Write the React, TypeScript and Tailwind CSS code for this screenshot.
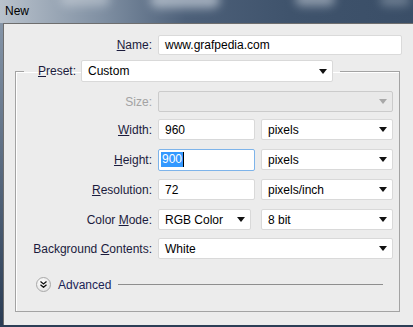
const Arrow = ({ disabled }: { disabled?: boolean }) => (
  <svg width="8" height="5" viewBox="0 0 8 5" className="shrink-0">
    <path d="M0 0h8L4 5z" fill={disabled ? "#a8a8a8" : "#111"} />
  </svg>
);

const Select = ({ value, w }: { value: string; w: string }) => (
  <div
    className={`flex h-[21px] ${w} items-center justify-between rounded-[2px] border border-[#d9d9d9] bg-white pl-[6px] pr-[5px] text-black`}
  >
    <span>{value}</span>
    <Arrow />
  </div>
);

const Field = ({ value, w }: { value: string; w: string }) => (
  <div
    className={`flex h-[21px] ${w} items-center rounded-[2px] border border-[#d9d9d9] bg-white pl-[6px] text-black`}
  >
    {value}
  </div>
);

const Label = ({ children, muted }: { children: React.ReactNode; muted?: boolean }) => (
  <div
    className={`w-[136px] shrink-0 text-right ${muted ? "text-[#a3a3a3]" : "text-[#1b1b3c]"}`}
  >
    {children}
  </div>
);

export default function App() {
  return (
    <div
      className="flex h-[327px] w-[413px] flex-col overflow-hidden bg-[#2c3e56] text-[12px] leading-[20px]"
      style={{ fontFamily: '"Liberation Sans", Arial, sans-serif' }}
    >
      {/* title bar */}
      <div className="relative h-[23px] shrink-0 overflow-hidden bg-[linear-gradient(90deg,#b9c2cc_0%,#7f8fa2_25%,#4d6079_45%,#3f536c_70%,#3a4e67_100%)]">
        <div className="absolute left-[150px] top-[-8px] h-[16px] w-[70px] rounded-full bg-[#c5ced8] opacity-70 blur-[5px]" />
        <div className="absolute left-[295px] top-[-8px] h-[14px] w-[40px] rounded-full bg-[#c0c9d3] opacity-60 blur-[5px]" />
        <div className="absolute left-[60px] top-[-8px] h-[14px] w-[50px] rounded-full bg-[#d4dae0] opacity-50 blur-[5px]" />
        <div className="absolute left-[380px] top-[-6px] h-[12px] w-[30px] rounded-full bg-[#9eabb9] opacity-50 blur-[5px]" />
        <div className="relative pl-[5px] pt-[1px] text-[12px] text-black">New</div>
      </div>

      <div className="flex h-[302px] shrink-0">
        <div className="w-[3px] shrink-0 bg-[linear-gradient(180deg,#8595a8,#2a3c54)]" />
        {/* dialog body */}
        <div className="flex flex-1 flex-col border-l border-t border-[#6e6e6e] bg-[#ececec]">
          {/* name */}
          <div className="mt-[11px] flex items-center">
            <div className="w-[148px] shrink-0 text-right text-[#1b1b3c]">
              <u>N</u>ame:
            </div>
            <div className="ml-[6px] flex h-[20px] w-[244px] items-center rounded-[2px] border border-[#dadada] bg-white pl-[6px] text-black">
              www.grafpedia.com
            </div>
          </div>

          {/* group */}
          <fieldset className="ml-[11px] mt-[5px] w-[385px] border border-[#a3a3a3] shadow-[inset_1px_1px_0_#fff]">
            <legend className="ml-[8px] pl-[14px] pr-[7px]">
              <div className="flex items-center">
                <span className="text-[#1b1b3c]">
                  <u>P</u>reset:
                </span>
                <div className="ml-[5px] flex h-[22px] w-[252px] items-center justify-between rounded-[2px] border border-[#d9d9d9] bg-white pl-[6px] pr-[5px] text-black">
                  <span>Custom</span>
                  <Arrow />
                </div>
              </div>
            </legend>

            <div className="flex flex-col pb-[19px]">
              <div className="mt-[9px] flex h-[21px] items-center">
                <Label muted>Size:</Label>
                <div className="ml-[6px] flex h-[21px] w-[235px] items-center justify-end rounded-[2px] border border-[#cbcbcb] bg-[#e9e9e9] pr-[5px]">
                  <Arrow disabled />
                </div>
              </div>

              <div className="mt-[7px] flex h-[21px] items-center">
                <Label>
                  <u>W</u>idth:
                </Label>
                <div className="ml-[6px]">
                  <Field value="960" w="w-[97px]" />
                </div>
                <div className="ml-[6px]">
                  <Select value="pixels" w="w-[132px]" />
                </div>
              </div>

              <div className="mt-[9px] flex h-[21px] items-center">
                <Label>
                  <u>H</u>eight:
                </Label>
                <div className="ml-[6px] flex h-[22px] w-[97px] items-center rounded-[2px] border border-[#7eb4ea] bg-white pl-[2px]">
                  <span className="bg-[#3399ff] px-[1px] leading-[15px] text-white">900</span>
                  <span className="h-[15px] w-px bg-black" />
                </div>
                <div className="ml-[6px]">
                  <Select value="pixels" w="w-[132px]" />
                </div>
              </div>

              <div className="mt-[9px] flex h-[21px] items-center">
                <Label>
                  <u>R</u>esolution:
                </Label>
                <div className="ml-[6px]">
                  <Field value="72" w="w-[97px]" />
                </div>
                <div className="ml-[6px]">
                  <Select value="pixels/inch" w="w-[132px]" />
                </div>
              </div>

              <div className="mt-[9px] flex h-[21px] items-center">
                <Label>
                  Color <u>M</u>ode:
                </Label>
                <div className="ml-[6px]">
                  <Select value="RGB Color" w="w-[93px]" />
                </div>
                <div className="ml-[10px]">
                  <Select value="8 bit" w="w-[132px]" />
                </div>
              </div>

              <div className="mt-[8px] flex h-[21px] items-center">
                <Label>
                  Background <u>C</u>ontents:
                </Label>
                <div className="ml-[6px]">
                  <Select value="White" w="w-[235px]" />
                </div>
              </div>

              {/* advanced */}
              <div className="mt-[18px] flex h-[15px] items-center">
                <div className="ml-[20px] flex h-[15px] w-[15px] items-center justify-center rounded-full border border-[#a9a9a9] bg-[radial-gradient(circle_at_40%_35%,#ffffff,#dcdcdc)]">
                  <svg width="7" height="7" viewBox="0 0 7 7">
                    <path d="M0.5 0.5L3.5 3L6.5 0.5M0.5 3.8L3.5 6.3L6.5 3.8" fill="none" stroke="#111" strokeWidth="1.3" />
                  </svg>
                </div>
                <span className="ml-[7px] text-[#1b2456]">Advanced</span>
                <div className="ml-[7px] mr-[16px] h-px flex-1 bg-[#8e8e8e]" />
              </div>
            </div>
          </fieldset>
        </div>
      </div>
      <div className="h-[2px] shrink-0 bg-[#2c3e56]" />
    </div>
  );
}
